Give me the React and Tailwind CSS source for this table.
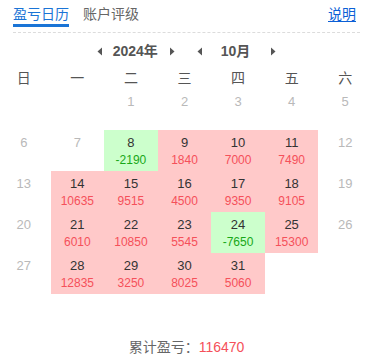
import React from "react";

const F = { fontFamily: '"Liberation Sans", "Noto Sans CJK SC", sans-serif' };

const rows = [
  [null, null, { d: 1 }, { d: 2 }, { d: 3 }, { d: 4 }, { d: 5 }],
  [{ d: 6 }, { d: 7 }, { d: 8, v: -2190 }, { d: 9, v: 1840 }, { d: 10, v: 7000 }, { d: 11, v: 7490 }, { d: 12 }],
  [{ d: 13 }, { d: 14, v: 10635 }, { d: 15, v: 9515 }, { d: 16, v: 4500 }, { d: 17, v: 9350 }, { d: 18, v: 9105 }, { d: 19 }],
  [{ d: 20 }, { d: 21, v: 6010 }, { d: 22, v: 10850 }, { d: 23, v: 5545 }, { d: 24, v: -7650 }, { d: 25, v: 15300 }, { d: 26 }],
  [{ d: 27 }, { d: 28, v: 12835 }, { d: 29, v: 3250 }, { d: 30, v: 8025 }, { d: 31, v: 5060 }, null, null],
];

const weekdays = ["日", "一", "二", "三", "四", "五", "六"];

function Tri({ dir }) {
  return (
    <svg width="6" height="9" viewBox="0 0 6 9" className="block">
      {dir === "l" ? (
        <path d="M5 0.5 L0.5 4.5 L5 8.5 Z" fill="#555" />
      ) : (
        <path d="M1 0.5 L5.5 4.5 L1 8.5 Z" fill="#555" />
      )}
    </svg>
  );
}

function Cell({ c }) {
  if (!c) return <div className="h-[41px]" />;
  if (c.v === undefined) {
    return (
      <div className="h-[41px] pt-[5px] text-center">
        <div className="text-[13px] leading-[16px] text-[#b9b9b9]">{c.d}</div>
      </div>
    );
  }
  const neg = c.v < 0;
  return (
    <div className={`h-[41px] pt-[5px] text-center ${neg ? "bg-[#ccffcc]" : "bg-[#ffc9c9]"}`}>
      <div className="text-[13px] leading-[16px] text-[#333]">{c.d}</div>
      <div className={`mt-[2px] text-[12px] leading-[15px] ${neg ? "text-[#18a818]" : "text-[#f5505a]"}`}>{c.v}</div>
    </div>
  );
}

export default function App() {
  return (
    <div className="w-[376px] h-[360px] bg-white overflow-hidden" style={F}>
      <div className="px-[13px] w-[373px]">
        <div className="flex items-end">
          <div className="pt-[5px] text-[14px] leading-[19px] text-[#1a74d6] border-b-[3px] border-[#1a74d6]">盈亏日历</div>
          <div className="ml-[14px] pt-[5px] pb-[3px] text-[14px] leading-[19px] text-[#666]">账户评级</div>
          <div className="ml-auto mr-[4px] pt-[5px] pb-[3px] text-[14px] leading-[19px] text-[#0b5fd6] underline underline-offset-2">说明</div>
        </div>
        <div className="mt-[5px] border-t border-dashed border-[#dcdcdc]" />
        <div className="mt-[8px] flex items-center justify-center text-[14px] leading-[20px] font-bold text-[#555]">
          <Tri dir="l" />
          <span className="ml-[10px] mr-[11px]">2024年</span>
          <Tri dir="r" />
          <span className="w-[22px]" />
          <Tri dir="l" />
          <span className="ml-[18px] mr-[20px]">10月</span>
          <Tri dir="r" />
        </div>
      </div>
      <div className="-ml-[3px] w-[375px]">
        <div className="mt-[7px] grid grid-cols-7 text-center text-[14px] leading-[20px] text-[#555]">
          {weekdays.map((w) => (
            <div key={w}>{w}</div>
          ))}
        </div>
        <div className="mt-[1px]">
          {rows.map((r, i) => (
            <div key={i} className="grid grid-cols-7">
              {r.map((c, j) => (
                <Cell key={j} c={c} />
              ))}
            </div>
          ))}
        </div>
      </div>
      <div className="mt-[43px] w-[373px] text-center text-[14px] leading-[20px] text-[#666]">
        累计盈亏：<span className="text-[#f5505a]">116470</span>
      </div>
    </div>
  );
}
